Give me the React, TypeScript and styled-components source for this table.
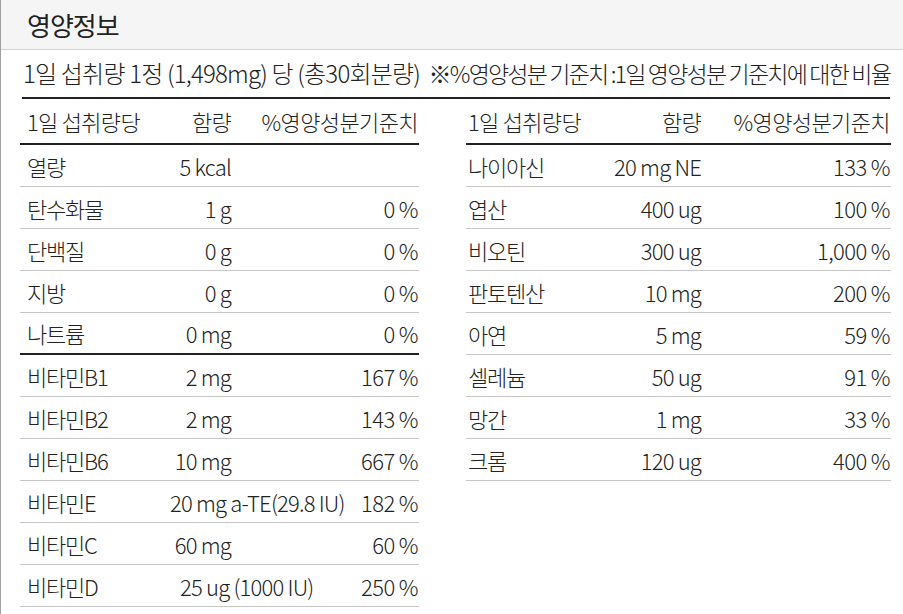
import React from "react";
import styled, { createGlobalStyle } from "styled-components";

const Global = createGlobalStyle`
  html, body { margin: 0; padding: 0; background: #ffffff; }
  body { font-family: "Noto Sans CJK KR", "Noto Sans", sans-serif; color: #222; }
`;

const Page = styled.div`
  width: 903px;
  height: 614px;
  box-sizing: border-box;
  border-left: 1px solid #a0a0a0;
  overflow: hidden;
  background: #fff;
`;

const Header = styled.header`
  height: 50px;
  box-sizing: border-box;
  background: #f5f5f5;
  border-bottom: 1px solid #cfcfcf;
  display: flex;
  align-items: center;
  padding-left: 26px;
`;

const Title = styled.h1`
  margin: 0;
  font-size: 26px;
  font-weight: 400;
  letter-spacing: -1px;
  color: #222;
`;

const Subtitle = styled.div`
  margin: 0 13px 0 21px;
  height: 49px;
  box-sizing: border-box;
  border-bottom: 2px solid #222;
  display: flex;
  align-items: center;
  justify-content: space-between;
  font-size: 24px;
  font-weight: 300;
  letter-spacing: -0.8px;
  white-space: nowrap;
  padding-left: 1px;
  padding-bottom: 2px;
`;

const Note = styled.span`
  font-size: 23px;
  letter-spacing: -1.8px;
`;

const Tables = styled.div`
  display: flex;
  align-items: flex-start;
  padding-left: 19px;
  gap: 47px;
`;

const Table = styled.div<{ $w: number }>`
  width: ${(p) => p.$w}px;
  display: flex;
  flex-direction: column;
`;

const Row = styled.div<{ $cols: string; $head?: boolean; $strong?: boolean }>`
  display: grid;
  grid-template-columns: ${(p) => p.$cols};
  align-items: center;
  height: ${(p) => (p.$head ? 46 : 42)}px;
  box-sizing: border-box;
  border-bottom: ${(p) => (p.$head || p.$strong ? "2px solid #222" : "1px solid #c6c6c6")};
  font-size: 22px;
  font-weight: 300;
  letter-spacing: ${(p) => (p.$head ? "-0.7px" : "-1.2px")};
  white-space: nowrap;
  color: #222;
`;

const Name = styled.span<{ $pad: number }>`
  padding-left: ${(p) => p.$pad}px;
`;

const Amount = styled.span<{ $lead?: number }>`
  text-align: ${(p) => (p.$lead !== undefined ? "left" : "right")};
  padding-left: ${(p) => p.$lead ?? 0}px;
  letter-spacing: -0.8px;
`;

const Pct = styled.span`
  text-align: right;
  padding-right: 1px;
  letter-spacing: -0.6px;
`;

type Item = { name: string; amount: string; pct: string; lead?: number; strong?: boolean };

const left: Item[] = [
  { name: "열량", amount: "5 kcal", pct: "" },
  { name: "탄수화물", amount: "1 g", pct: "0 %" },
  { name: "단백질", amount: "0 g", pct: "0 %" },
  { name: "지방", amount: "0 g", pct: "0 %" },
  { name: "나트륨", amount: "0 mg", pct: "0 %", strong: true },
  { name: "비타민B1", amount: "2 mg", pct: "167 %" },
  { name: "비타민B2", amount: "2 mg", pct: "143 %" },
  { name: "비타민B6", amount: "10 mg", pct: "667 %" },
  { name: "비타민E", amount: "20 mg a-TE(29.8 IU)", pct: "182 %", lead: 4 },
  { name: "비타민C", amount: "60 mg", pct: "60 %" },
  { name: "비타민D", amount: "25 ug (1000 IU)", pct: "250 %", lead: 14 },
];

const right: Item[] = [
  { name: "나이아신", amount: "20 mg NE", pct: "133 %" },
  { name: "엽산", amount: "400 ug", pct: "100 %" },
  { name: "비오틴", amount: "300 ug", pct: "1,000 %" },
  { name: "판토텐산", amount: "10 mg", pct: "200 %" },
  { name: "아연", amount: "5 mg", pct: "59 %" },
  { name: "셀레늄", amount: "50 ug", pct: "91 %" },
  { name: "망간", amount: "1 mg", pct: "33 %" },
  { name: "크롬", amount: "120 ug", pct: "400 %" },
];

function NutritionTable({ items, width, cols, pad }: { items: Item[]; width: number; cols: string; pad: number }) {
  return (
    <Table $w={width}>
      <Row $cols={cols} $head>
        <Name $pad={pad}>1일 섭취량당</Name>
        <Amount>함량</Amount>
        <Pct>%영양성분기준치</Pct>
      </Row>
      {items.map((it) => (
        <Row key={it.name} $cols={cols} $strong={it.strong}>
          <Name $pad={pad}>{it.name}</Name>
          <Amount $lead={it.lead}>{it.amount}</Amount>
          <Pct>{it.pct}</Pct>
        </Row>
      ))}
    </Table>
  );
}

export default function App() {
  return (
    <>
      <Global />
      <Page>
        <Header>
          <Title>영양정보</Title>
        </Header>
        <Subtitle>
          <span>1일 섭취량 1정 (1,498mg) 당 (총30회분량)</span>
          <Note>※%영양성분 기준치 :1일 영양성분 기준치에 대한 비율</Note>
        </Subtitle>
        <Tables>
          <NutritionTable items={left} width={399} cols="146px 65px 1fr" pad={7} />
          <NutritionTable items={right} width={425} cols="140px 95px 1fr" pad={2} />
        </Tables>
      </Page>
    </>
  );
}
